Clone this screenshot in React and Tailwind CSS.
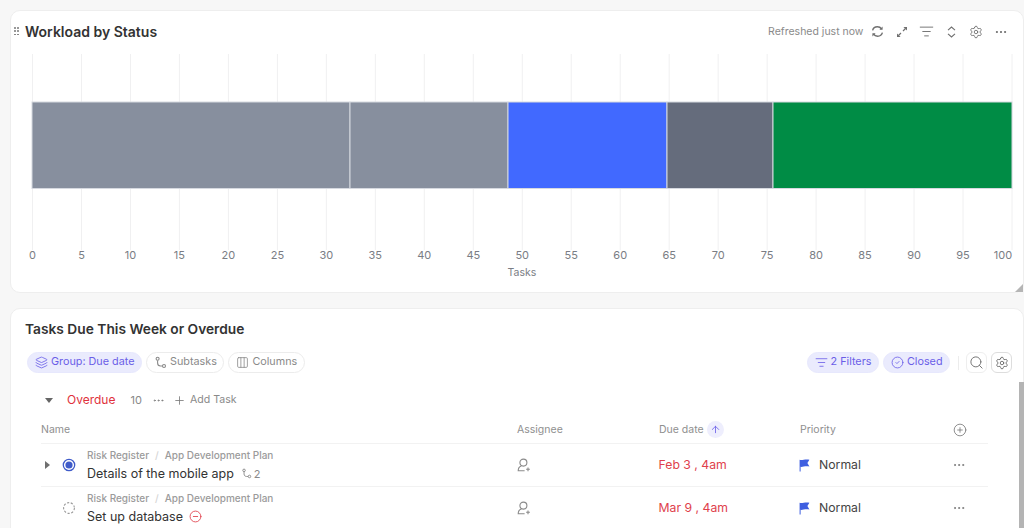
import {
  ArrowUp, CircleCheck, CircleMinus, CirclePlus, Columns3, Ellipsis, Layers,
  ListFilter, Plus, Search, Settings,
} from 'lucide-react';

const FONT = { fontFamily: 'Inter, "Liberation Sans", sans-serif' };

const TICKS = Array.from({ length: 21 }, (_, i) => i * 5);
const SEGMENTS = [
  { x: 32, w: 318, fill: '#878f9e' },
  { x: 350, w: 158, fill: '#878f9e' },
  { x: 508, w: 159, fill: '#4169ff' },
  { x: 667, w: 106, fill: '#656c7c' },
  { x: 773, w: 239, fill: '#008c45' },
];

const ROWS = [
  { name: 'Details of the mobile app', due: 'Feb 3 , 4am', status: 'active', subtasks: 2 },
  { name: 'Set up database', due: 'Mar 9 , 4am', status: 'todo', blocked: true },
];

function WorkloadChart() {
  const tickX = (t) => 32.5 + t * 9.795;
  return (
    <svg width="1014" height="240" viewBox="0 0 1014 240" className="block -ml-[25px]">
      <g transform="translate(0,-52)">
        {TICKS.map((t) => (
          <line key={t} x1={tickX(t)} x2={tickX(t)} y1="54" y2="250" stroke="#f0f0f1" />
        ))}
        {SEGMENTS.map((s) => (
          <rect key={s.x} x={s.x} y="102" width={s.w} height="86.5" fill={s.fill} stroke="#d6d9e0" strokeWidth="1" />
        ))}
        {TICKS.map((t) => (
          <text key={t} x={t === 100 ? 1003 : tickX(t)} y="259" textAnchor="middle" fontSize="11" fill="#7a7d84">
            {t}
          </text>
        ))}
        <text x="522" y="276" textAnchor="middle" fontSize="10.5" fill="#7a7d84">Tasks</text>
      </g>
    </svg>
  );
}

function SubtaskIcon({ size = 13 }) {
  return (
    <svg width={size} height={size} viewBox="0 0 13 13" fill="none" stroke="currentColor" strokeWidth="1.1">
      <circle cx="3.6" cy="2.8" r="1.5" />
      <circle cx="10" cy="10" r="1.5" />
      <path d="M3.6 4.4 V7 C3.6 9 5 10 6.5 10 H8.4" />
    </svg>
  );
}

function AssigneeIcon() {
  return (
    <svg width="14" height="14" viewBox="0 0 14 14" fill="none" stroke="#8a8a8a" strokeWidth="1.1">
      <circle cx="6.4" cy="4.6" r="3.5" />
      <path d="M4.4 8 C2.4 8.6 1.2 10 1.2 12.8 H7.6" />
      <path d="M11 9.4 V13.2 M9.1 11.3 H12.9" />
    </svg>
  );
}

function Chip({ icon: Icon, label, on }) {
  return (
    <div className={`flex h-[21px] items-center gap-[3px] rounded-full border pl-[7px] pr-[6.5px] text-[10.8px] ${on ? 'border-[#e7e8fd] bg-[#eaebfd] text-[#6a5ee8]' : 'border-[#ececec] bg-white text-[#8a8a8a]'}`}>
      <Icon size={13} strokeWidth={1.5} />
      <span>{label}</span>
    </div>
  );
}

function Flag() {
  return (
    <svg width="11" height="13" viewBox="0 0 11 13">
      <path d="M0.6 0.8 C3 1.8 6 -0.2 10.4 0.8 L8.4 4 L10.4 7.6 C6 6.8 3 8.4 1.6 7.8 V12.6 H0.6 Z" fill="#3f5fe0" />
    </svg>
  );
}

function StatusDot({ status }) {
  if (status === 'active') {
    return (
      <svg width="14" height="14" viewBox="0 0 14 14">
        <circle cx="7" cy="7" r="5.7" fill="none" stroke="#3f5bc9" strokeWidth="1.3" />
        <circle cx="7" cy="7" r="3.6" fill="#3f5bc9" />
      </svg>
    );
  }
  return (
    <svg width="14" height="14" viewBox="0 0 14 14">
      <circle cx="7" cy="7" r="5.4" fill="none" stroke="#9a9a9a" strokeWidth="1.1" strokeDasharray="2.2 1.6" />
    </svg>
  );
}

function TaskRow({ row }) {
  return (
    <div className="flex h-[43px] items-center border-t border-[#f2f2f2]">
      <div className="flex w-[21px] justify-start pl-[4px]">
        {row.subtasks && (
          <svg width="5" height="8" viewBox="0 0 5 8"><path d="M0 0 L5 4 L0 8 Z" fill="#6f6f6f" /></svg>
        )}
      </div>
      <StatusDot status={row.status} />
      <div className="ml-[11px] w-[429px]">
        <div className="flex items-center text-[10px] font-medium leading-[12px] text-[#9b9b9b]">
          <span>Risk Register</span>
          <span className="mx-[6px] text-[#d5d5d5]">/</span>
          <span>App Development Plan</span>
        </div>
        <div className="mt-[5px] flex items-center text-[12.5px] leading-[16px] text-[#333]">
          <span>{row.name}</span>
          {row.subtasks && (
            <span className="ml-[7px] flex items-center gap-[2px] text-[11px] text-[#8a8a8a]">
              <SubtaskIcon size={11} />
              {row.subtasks}
            </span>
          )}
          {row.blocked && <CircleMinus size={13} strokeWidth={1.6} className="ml-[6px] text-[#e0414c]" />}
        </div>
      </div>
      <div className="w-[142px] pl-[1px]">
        <AssigneeIcon />
      </div>
      <div className="w-[141px] pl-[0.5px] pt-[1px] text-[12.25px] text-[#e0414c]">{row.due}</div>
      <div className="flex w-[153px] items-center gap-[9px] pt-[1px] text-[12.25px] text-[#444]">
        <Flag />
        <span>Normal</span>
      </div>
      <Ellipsis size={14} strokeWidth={1.6} className="text-[#777]" />
    </div>
  );
}

function ToolSlot({ children }) {
  return <div className="flex w-[24.6px] justify-center">{children}</div>;
}

export default function App() {
  return (
    <div style={FONT} className="relative h-[528px] w-[1024px] overflow-hidden bg-[#f7f7f7]">
      <div className="pl-[10px] pt-[10px]">
        <section className="relative h-[283px] rounded-[10px] border border-[#eeeeee] bg-white pl-[14px]">
          <div className="flex h-[41px] items-center pr-[10px]">
            <span className="absolute left-[3px] top-[16px] grid grid-cols-2 gap-x-[1.6px] gap-y-[1.7px]">
              {[0, 1, 2, 3, 4, 5].map((d) => (
                <i key={d} className="h-[1.7px] w-[1.7px] rounded-full bg-[#777]" />
              ))}
            </span>
            <h2 className="text-[14px] font-semibold text-[#333]">Workload by Status</h2>
            <div className="ml-auto flex items-center text-[#6f6f6f]">
              <span className="mr-[2px] text-[10.5px] text-[#8a8a8a]">Refreshed just now</span>
              <ToolSlot>
                <svg width="13" height="13" viewBox="0 0 13 13" fill="none" stroke="currentColor" strokeWidth="1.4">
                  <path d="M1.6 5.4 C2.2 3 4 1.8 6.4 1.8 C8.2 1.8 9.6 2.6 10.6 4" />
                  <path d="M11.4 7.6 C10.8 10 9 11.2 6.6 11.2 C4.8 11.2 3.4 10.4 2.4 9" />
                  <path d="M11.6 1.6 V4.8 H8.4 Z M1.4 11.4 V8.2 H4.6 Z" fill="currentColor" stroke="none" />
                </svg>
              </ToolSlot>
              <ToolSlot>
                <svg width="12" height="12" viewBox="0 0 12 12" fill="none" stroke="currentColor" strokeWidth="1.2">
                  <path d="M7 5 L9.5 2.5 M5 7 L2.5 9.5" />
                  <path d="M7.4 1 H11 V4.6 Z M1 7.4 V11 H4.6 Z" fill="currentColor" stroke="none" />
                </svg>
              </ToolSlot>
              <ToolSlot><ListFilter size={15} strokeWidth={1.5} /></ToolSlot>
              <ToolSlot>
                <svg width="9" height="12" viewBox="0 0 9 12" fill="none" stroke="currentColor" strokeWidth="1.1">
                  <path d="M1 4.2 L4.5 1 L8 4.2 M1 7.8 L4.5 11 L8 7.8" />
                </svg>
              </ToolSlot>
              <ToolSlot><Settings size={14} strokeWidth={1.5} /></ToolSlot>
              <ToolSlot><Ellipsis size={14} strokeWidth={1.8} /></ToolSlot>
            </div>
          </div>
          <WorkloadChart />
          <svg width="8" height="8" viewBox="0 0 8 8" className="absolute bottom-0 right-0">
            <path d="M8 0 V8 H0 Z" fill="#b5b5b5" />
          </svg>
        </section>

        <section className="mt-[15px] h-[240px] rounded-[10px] border border-[#eeeeee] bg-white pl-[14px] pr-[11px] pt-[11px]">
          <h2 className="text-[13.75px] font-semibold leading-[18px] text-[#333]">Tasks Due This Week or Overdue</h2>
          <div className="mt-[14px] flex items-center pl-[2px]">
            <div className="flex gap-[4px]">
              <Chip icon={Layers} label="Group: Due date" on />
              <Chip icon={SubtaskIcon} label="Subtasks" />
              <Chip icon={Columns3} label="Columns" />
            </div>
            <div className="ml-auto flex items-center gap-[4px]">
              <Chip icon={ListFilter} label="2 Filters" on />
              <Chip icon={CircleCheck} label="Closed" on />
              <div className="mx-[3.5px] h-[14px] w-px bg-[#ececec]" />
              <button className="flex h-[21px] w-[21px] items-center justify-center rounded-[6px] border border-[#eee] text-[#777]">
                <Search size={15} strokeWidth={1.6} />
              </button>
              <button className="flex h-[21px] w-[21px] items-center justify-center rounded-[6px] border border-[#ddd] text-[#666]">
                <Settings size={14} strokeWidth={1.5} />
              </button>
            </div>
          </div>
          <div className="mt-[17px] flex h-[20px] items-center pl-[20px]">
            <svg width="8" height="5" viewBox="0 0 8 5"><path d="M0 0 H8 L4 5 Z" fill="#666" /></svg>
            <span className="ml-[14px] text-[12px] text-[#e0313c]">Overdue</span>
            <span className="ml-[15px] text-[11px] text-[#888]">10</span>
            <Ellipsis size={13} strokeWidth={1.5} className="ml-[10px] text-[#777]" />
            <Plus size={13} strokeWidth={1.5} className="ml-[8px] text-[#777]" />
            <span className="ml-[4px] text-[10.6px] text-[#8a8a8a]">Add Task</span>
          </div>
          <div className="ml-[16px] mr-[24px]">
            <div className="mt-[8px] flex h-[25px] items-center pb-[2px] text-[10.5px] text-[#8f8f8f]">
              <span className="w-[476px]">Name</span>
              <span className="w-[142px]">Assignee</span>
              <span className="flex w-[141px] items-center gap-[3px]">
                Due date
                <span className="flex h-[17px] w-[17px] items-center justify-center rounded-full bg-[#eeeefd] text-[#6a5ee8]">
                  <ArrowUp size={11} strokeWidth={1.8} />
                </span>
              </span>
              <span className="w-[153px]">Priority</span>
              <CirclePlus size={14} strokeWidth={1.4} className="text-[#777]" />
            </div>
            {ROWS.map((row) => <TaskRow key={row.name} row={row} />)}
          </div>
        </section>
      </div>
      <div className="absolute right-0 top-[382px] h-[146px] w-[5px] bg-[#b4b4b4]" />
    </div>
  );
}
